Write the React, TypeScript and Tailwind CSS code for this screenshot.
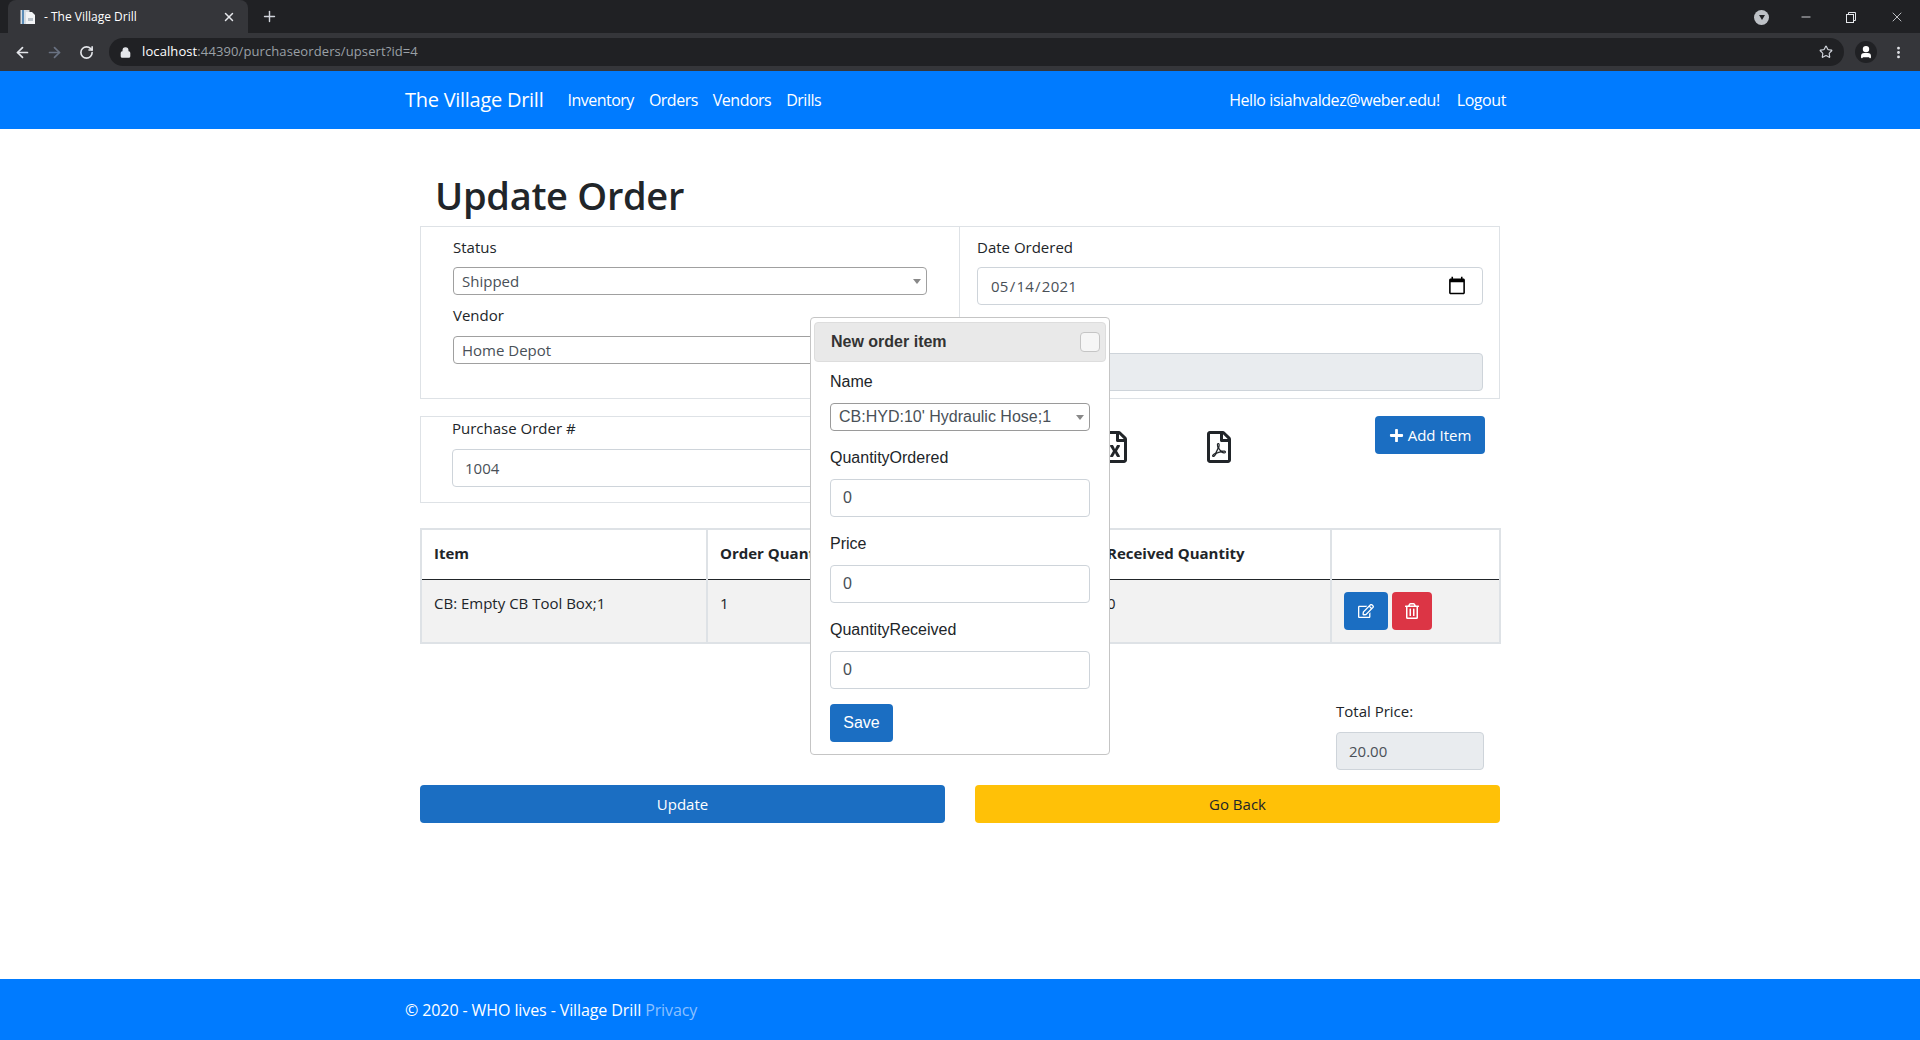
import React from "react";
import { FaPlus, FaRegEdit, FaRegFileExcel, FaRegFilePdf, FaRegTrashAlt } from "react-icons/fa";
import { ArrowLeft, ArrowRight, Lock, Minus, MoreVertical, Plus, RotateCw, Star, User, X } from "lucide-react";

function BrowserChrome() {
  return (
    <div className="bg-[#35363a] font-['Open_Sans',sans-serif]">
      {/* Tab strip */}
      <div className="relative flex h-[33px] items-end bg-[#202124] pl-2">
        <div className="flex h-[33px] w-[240px] items-center rounded-t-lg bg-[#35363a] pl-3 pr-3">
          <svg width="16" height="16" viewBox="0 0 16 16" className="shrink-0">
            <rect x="0.5" y="1" width="9" height="14" fill="#d6dde3" />
            <rect x="2" y="1" width="2" height="14" fill="#5b8db8" />
            <path d="M6 3h6l3 3v9H6z" fill="#f2f4f6" />
            <rect x="8" y="9" width="5" height="3" fill="#b9c2ca" />
          </svg>
          <span className="ml-2 flex-1 text-[12px] text-white">- The Village Drill</span>
          <X size={14} strokeWidth={2.5} className="text-gray-200" />
        </div>
        <Plus size={17} strokeWidth={2} className="mb-[8px] ml-[13px] text-gray-300" />
        <div className="ml-auto flex items-center pb-[8px] pr-[15px] text-gray-200">
          <div className="mr-[30px] flex h-[15px] w-[15px] items-center justify-center rounded-full bg-[#bdc1c6]">
            <div className="mt-[1px] h-0 w-0 border-x-[3px] border-t-[5px] border-x-transparent border-t-[#202124]" />
          </div>
          <Minus size={14} strokeWidth={1.5} className="mr-[32px]" />
          <svg width="12" height="12" viewBox="0 0 12 12" fill="none" stroke="currentColor" className="mr-[32px]">
            <rect x="1.5" y="3.5" width="7" height="8" />
            <path d="M3.5 3.5v-2h7v8h-2" />
          </svg>
          <X size={16} strokeWidth={1.2} />
        </div>
      </div>
      {/* Toolbar */}
      <div className="flex h-[38px] items-center pl-[14px] text-gray-200">
        <ArrowLeft size={17} strokeWidth={2.4} />
        <ArrowRight size={17} strokeWidth={2.4} className="ml-[15px] text-gray-500" />
        <RotateCw size={15} strokeWidth={2.6} className="ml-[16px]" />
        <div className="ml-[15px] flex h-[28px] w-[1735px] items-center rounded-full bg-[#202124] pl-[11px] pr-[11px]">
          <Lock size={11} strokeWidth={3} fill="currentColor" />
          <span className="ml-[11px] text-[13px] tracking-[0.1px] text-white">
            localhost<span className="text-[#9aa0a6]">:44390/purchaseorders/upsert?id=4</span>
          </span>
          <Star size={14} strokeWidth={2} className="ml-auto text-gray-300" />
        </div>
        <div className="ml-[11px] flex h-[22px] w-[22px] items-center justify-center rounded-full bg-[#202124]">
          <User size={14} strokeWidth={3} fill="currentColor" className="text-white" />
        </div>
        <MoreVertical size={15} strokeWidth={2.5} className="ml-[14px]" />
      </div>
    </div>
  );
}

function Navbar() {
  return (
    <nav className="h-[58px] bg-[#007bff] text-white">
      <div className="mx-auto flex h-full w-[1110px] items-center">
        <span className="mr-[24px] text-[20px] tracking-[-0.27px]">The Village Drill</span>
        {["Inventory", "Orders", "Vendors", "Drills"].map((link) => (
          <a key={link} className="mr-[15px] text-[16px] tracking-[-0.5px]">
            {link}
          </a>
        ))}
        <span className="ml-auto text-[16px] tracking-[-0.42px]">Hello isiahvaldez@weber.edu!</span>
        <a className="ml-[17px] mr-[9px] text-[16px] tracking-[-0.42px]">Logout</a>
      </div>
    </nav>
  );
}

function NewItemPopup() {
  const fieldClass = "block h-[38px] w-full rounded border border-[#ced4da] bg-white px-3 text-[16px] text-[#495057]";
  const labelClass = "mb-[9px] block h-[24px] text-[16px] leading-[24px] text-[#212529]";

  return (
    <div className="absolute left-[810px] top-[317px] h-[438px] w-[300px] rounded-sm border border-[#c5c5c5] bg-white px-[3px] pt-[4px] font-['Liberation_Sans',sans-serif]">
      <div className="flex h-[40px] items-center justify-between rounded-sm border border-[#dddddd] bg-[#e9e9e9] pl-[16px] pr-[5px]">
        <span className="text-[16px] font-bold text-[#333333]">New order item</span>
        <div className="h-[20px] w-[20px] rounded-sm border border-[#c5c5c5] bg-[#f6f6f6]" />
      </div>
      <div className="px-[16px] pt-[8px]">
        <label className={labelClass}>Name</label>
        <div className="relative mb-[15px]">
          <select className="block h-[28px] w-full appearance-none rounded border border-[#9a9a9a] bg-white pl-[8px] text-[16px] text-[#495057]">
            <option>CB:HYD:10' Hydraulic Hose;1</option>
          </select>
          <div className="absolute right-[6px] top-[12px] h-0 w-0 border-x-[4px] border-t-[5px] border-x-transparent border-t-[#888888]" />
        </div>
        <label className={labelClass}>QuantityOrdered</label>
        <input className={`${fieldClass} mb-[15px]`} defaultValue="0" />
        <label className={labelClass}>Price</label>
        <input className={`${fieldClass} mb-[15px]`} defaultValue="0" />
        <label className={labelClass}>QuantityReceived</label>
        <input className={`${fieldClass} mb-[15px]`} defaultValue="0" />
        <button className="h-[38px] w-[63px] rounded bg-[#1b6ec2] text-[16px] text-white">Save</button>
      </div>
    </div>
  );
}

function HeaderSelect({ value }: { value: string }) {
  return (
    <div className="relative">
      <select className="block h-[28px] w-full appearance-none rounded border border-[#a0a0a0] bg-white pl-[8px] text-[15px] text-[#495057]">
        <option>{value}</option>
      </select>
      <div className="absolute right-[6px] top-[12px] h-0 w-0 border-x-[4px] border-t-[5px] border-x-transparent border-t-[#888888]" />
    </div>
  );
}

export default function App() {
  const labelClass = "block h-[24px] text-[15px] leading-[22px] text-[#212529]";
  const inputClass = "block h-[38px] w-full rounded border border-[#ced4da] px-3 text-[15px] text-[#495057]";

  return (
    <div className="relative flex h-[1040px] flex-col overflow-hidden bg-white font-['Open_Sans',sans-serif] text-[#212529]">
      <BrowserChrome />
      <Navbar />

      <main className="mx-auto w-[1080px] flex-1">
        <h1 className="mb-[7px] mt-[42px] h-[48px] pl-[15px] text-[38px] font-semibold leading-[48px] tracking-[-0.3px]">Update Order</h1>

        <div className="grid h-[173px] grid-cols-[539px_541px] border border-[#dee2e6]">
          <div className="border-r border-[#dee2e6] pl-[32px] pr-[32px] pt-[9px]">
            <label className={labelClass}>Status</label>
            <div className="mb-[9px] mt-[7px]">
              <HeaderSelect value="Shipped" />
            </div>
            <label className={labelClass}>Vendor</label>
            <div className="mt-[8px]">
              <HeaderSelect value="Home Depot" />
            </div>
          </div>
          <div className="pl-[17px] pr-[18px] pt-[9px]">
            <label className={labelClass}>Date Ordered</label>
            <input
              type="date"
              className={`${inputClass} mb-[48px] mt-[7px] bg-white tracking-[0.25px] [&::-webkit-calendar-picker-indicator]:mr-[3px] [&::-webkit-calendar-picker-indicator]:h-[20px] [&::-webkit-calendar-picker-indicator]:w-[20px] [&::-webkit-calendar-picker-indicator]:p-0`}
              defaultValue="2021-05-14"
            />
            <input className={`${inputClass} bg-[#e9ecef]`} disabled />
          </div>
        </div>

        <div className="mt-[17px] flex h-[87px]">
          <div className="w-[539px] border border-[#dee2e6] pl-[31px] pr-[32px]">
            <label className={labelClass}>Purchase Order #</label>
            <input className={`${inputClass} mt-[8px] bg-white`} defaultValue="1004" />
          </div>
          <div className="flex flex-1 items-start">
            <FaRegFileExcel className="ml-[140px] mt-[15px] text-[#212529]" size={32} />
            <FaRegFilePdf className="ml-[72px] mt-[15px] text-[#212529]" size={32} />
            <button className="ml-[140px] flex h-[38px] w-[110px] items-center justify-center gap-[4px] rounded bg-[#1b6ec2] text-[15px] text-white">
              <FaPlus size={15} />
              Add Item
            </button>
          </div>
        </div>

        <table className="mt-[25px] w-[1079px] table-fixed border-collapse text-[15px]">
          <colgroup>
            <col className="w-[286px]" />
            <col className="w-[193px]" />
            <col className="w-[194px]" />
            <col className="w-[237px]" />
            <col className="w-[169px]" />
          </colgroup>
          <thead>
            <tr className="h-[50px] font-bold">
              {["Item", "Order Quantity", "Price", "Received Quantity", ""].map((title) => (
                <th key={title} className="border-2 border-b border-[#dee2e6] border-b-[#212529] px-[12px] pb-[2px] text-left">
                  {title}
                </th>
              ))}
            </tr>
          </thead>
          <tbody>
            <tr className="h-[64px] bg-[#f2f2f2]">
              <td className="border-2 border-t-0 border-[#dee2e6] px-[12px] pb-[15px] align-middle">CB: Empty CB Tool Box;1</td>
              <td className="border-2 border-t-0 border-[#dee2e6] px-[12px] pb-[15px] align-middle">1</td>
              <td className="border-2 border-t-0 border-[#dee2e6] px-[12px] pb-[15px] align-middle">20.00</td>
              <td className="border-2 border-t-0 border-[#dee2e6] px-[12px] pb-[15px] align-middle">0</td>
              <td className="border-2 border-t-0 border-[#dee2e6] px-[12px] align-middle">
                <div className="flex gap-[4px]">
                  <button className="flex h-[38px] w-[44px] items-center justify-center rounded bg-[#1b6ec2] text-white">
                    <FaRegEdit size={16} />
                  </button>
                  <button className="flex h-[38px] w-[40px] items-center justify-center rounded bg-[#dc3545] text-white">
                    <FaRegTrashAlt size={16} />
                  </button>
                </div>
              </td>
            </tr>
          </tbody>
        </table>

        <div className="ml-[916px] mt-[56px] w-[148px]">
          <label className={labelClass}>Total Price:</label>
          <input className={`${inputClass} mt-[8px] bg-[#e9ecef]`} defaultValue="20.00" disabled />
        </div>

        <div className="mt-[15px] grid grid-cols-2 gap-[30px]">
          <button className="h-[38px] rounded bg-[#1b6ec2] text-[15px] text-white">Update</button>
          <button className="h-[38px] rounded bg-[#ffc107] text-[15px] text-[#212529]">Go Back</button>
        </div>
      </main>

      <footer className="h-[61px] bg-[#007bff] text-white">
        <div className="mx-auto flex h-full w-[1110px] items-center text-[16px] tracking-[-0.1px]">
          <span>
            © 2020 - WHO lives - Village Drill <a className="text-[#8cc0ff]">Privacy</a>
          </span>
        </div>
      </footer>

      <NewItemPopup />
    </div>
  );
}
